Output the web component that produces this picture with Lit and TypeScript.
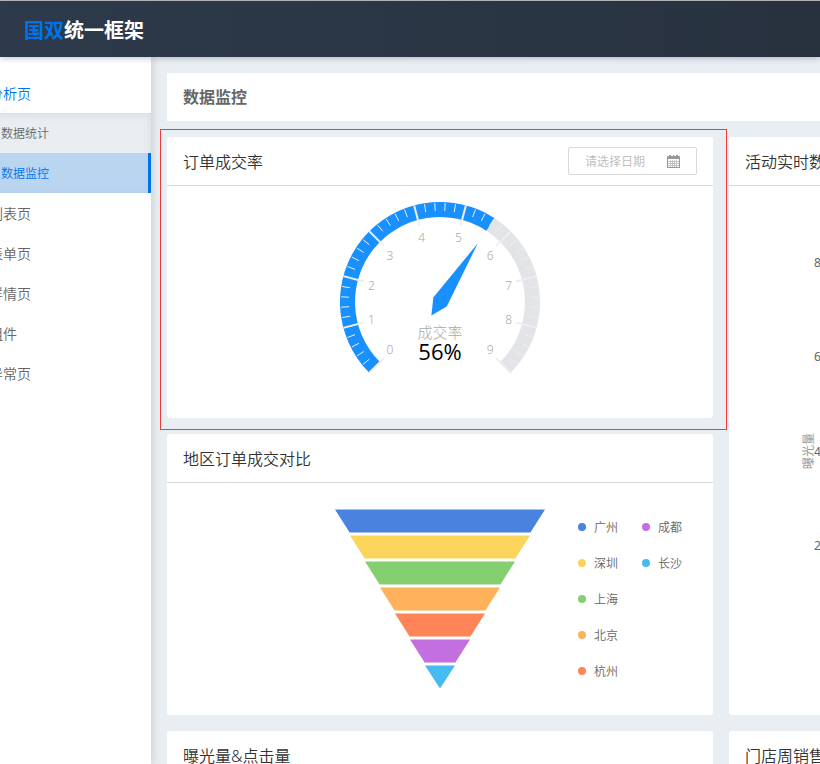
import { LitElement, html, svg, css } from "lit";
import { customElement } from "lit/decorators.js";
import { classMap } from "lit/directives/class-map.js";

const FONT = css`"Noto Sans", "Noto Sans CJK SC", sans-serif`;

const polar = (r: number, deg: number) => {
  const a = (deg * Math.PI) / 180;
  return [Math.sin(a) * r, -Math.cos(a) * r];
};

const ring = (from: number, to: number, inner: number, outer: number) => {
  const large = to - from > 180 ? 1 : 0;
  const [a, b, c, d] = [polar(outer, from), polar(outer, to), polar(inner, to), polar(inner, from)];
  return `M${a} A${outer} ${outer} 0 ${large} 1 ${b} L${c} A${inner} ${inner} 0 ${large} 0 ${d}Z`;
};

@customElement("gauge-chart")
export class GaugeChart extends LitElement {
  static styles = css`
    :host { display: flex; justify-content: center; }
    text { font-family: ${FONT}; text-anchor: middle; }
    .track { fill: #e2e4e8; }
    .value { fill: #1890ff; }
    .major { stroke: #eeeeee; stroke-width: 2; }
    .minor { stroke: #eeeeee; stroke-width: 1; }
    .num { font-size: 12px; font-weight: 300; fill: #aaaaaa; }
    .label { font-size: 15px; font-weight: 300; fill: #aaaaaa; }
    .percent { font-family: "Open Sans", ${FONT}; font-size: 22px; fill: #000000; }
  `;
  render() {
    const start = -135;
    const end = start + 5.6 * 30;
    const line = (cls: string, deg: number, r1: number, r2: number) => {
      const [x1, y1] = polar(r1, deg);
      const [x2, y2] = polar(r2, deg);
      return svg`<line class=${cls} x1=${x1} y1=${y1} x2=${x2} y2=${y2}></line>`;
    };
    const minors = Array.from({ length: 45 }, (_, i) => i).filter((i) => i % 5);
    const majors = Array.from({ length: 10 }, (_, i) => i);
    return html`<svg width="240" height="232" viewBox="-120 -116 240 232" role="img" aria-label="成交率 56%">
      <path class="track" d=${ring(start, 135, 85, 100)}></path>
      <path class="value" d=${ring(start, end, 85, 100)}></path>
      ${minors.map((i) => line("minor", start + i * 6, 91, 99))}
      ${majors.map((i) => line("major", start + i * 30, 79, 100))}
      ${majors.map((i) => {
        const [x] = polar(71, start + i * 30);
        const [, y] = polar(67, start + i * 30);
        return svg`<text class="num" x=${x} y=${y + 5}>${i}</text>`;
      })}
      <path class="value" d="M37.8 -58.7 L6.7 4.6 L-8.6 13.5 L-6.7 -4.5Z"></path>
      <text class="label" x="0" y="36">成交率</text>
      <text class="percent" x="0" y="58">56%</text>
    </svg>`;
  }
}

const REGIONS = [
  ["广州", "#4a82e0"],
  ["深圳", "#fbd55b"],
  ["上海", "#84cf70"],
  ["北京", "#ffb25b"],
  ["杭州", "#ff8458"],
  ["成都", "#c46fe0"],
  ["长沙", "#45bbef"],
];

@customElement("funnel-chart")
export class FunnelChart extends LitElement {
  static styles = css`
    :host { display: grid; grid-template-columns: 1fr 210px 1fr; padding-top: 26px; }
    .funnel { grid-column: 2; }
    .legend {
      display: grid; grid-auto-flow: column; grid-template-rows: repeat(5, 36px);
      justify-content: start; column-gap: 24px; margin: 0 0 0 33px; padding: 0; list-style: none;
      font: 12px/36px ${FONT}; font-weight: 350; color: #666666;
    }
    .item { display: flex; align-items: center; gap: 8px; height: 36px; }
    .region { line-height: 34px; padding-top: 2px; }
    .dot { width: 8px; height: 8px; }
  `;
  render() {
    return html`
      <svg class="funnel" width="210" height="180" viewBox="-105 0 210 180" role="img" aria-label="地区订单成交对比">
        ${REGIONS.map(([, color], i) => {
          const w = 105 - 15 * i;
          const b = i === 6 ? 0 : w - 14.6;
          const y = 0.4 + 26 * i;
          return svg`<polygon fill=${color} points="${-w},${y} ${w},${y} ${b},${y + 23.2} ${-b},${y + 23.2}"></polygon>`;
        })}
      </svg>
      <ul class="legend">
        ${REGIONS.map(([name, color]) => html`<li class="item">
          <svg class="dot" viewBox="0 0 8 8" aria-hidden="true"><circle cx="4" cy="4" r="4" fill=${color}></circle></svg>
          <span class="region">${name}</span>
        </li>`)}
      </ul>`;
  }
}

@customElement("exposure-chart")
export class ExposureChart extends LitElement {
  static styles = css`
    :host { display: block; }
    .plot { display: block; width: 100%; height: 529px; }
    text { font: 12px ${FONT}; }
    .tick { fill: #666666; }
    .title { fill: #999999; text-anchor: middle; }
  `;
  render() {
    return html`<svg class="plot" role="img" aria-label="曝光量">
      ${[8, 6, 4, 2].map((n, i) => svg`<text class="tick" x="85" y=${81 + Math.round(i * 94.3)}>${n}</text>`)}
      <text class="title" transform="translate(84 265) rotate(-90)">曝光量</text>
    </svg>`;
  }
}

@customElement("app-root")
export class AppRoot extends LitElement {
  static styles = css`
    :host {
      display: flex; flex-direction: column; height: 100vh; overflow: hidden;
      background: #e9eef2; color: #333333; font: 14px/40px ${FONT};
    }
    * { box-sizing: border-box; }
    .top {
      flex: none; height: 57px; padding: 0 24px; display: flex; align-items: center;
      position: relative; z-index: 3; border-top: 1px solid #b0b3b5;
      background: linear-gradient(90deg, #2d3a4b, #28323f);
      box-shadow: 0 1px 6px rgba(40, 30, 90, 0.3);
    }
    .brand { margin: 0; padding-top: 4px; font-size: 20px; line-height: 52px; font-weight: 700; color: #ffffff; }
    .accent { color: #0073eb; }
    .body { flex: 1; display: flex; min-height: 0; }
    .side {
      flex: none; width: 200px; margin-left: -49px; padding-top: 16px;
      position: relative; z-index: 2; background: #ffffff;
      box-shadow: 2px 0 8px rgba(0, 21, 41, 0.13);
    }
    .link {
      display: block; height: 40px; padding: 2px 0 0 38px; line-height: 38px; color: #666666;
      font-weight: 350; text-decoration: none; white-space: nowrap;
    }
    .open { color: #0073eb; }
    .sub { background: #e9eef2; box-shadow: inset 0 2px 8px rgba(0, 21, 41, 0.08); }
    .sub .link { padding-left: 50px; font-size: 12px; }
    .sub .current { color: #0073eb; background: rgba(0, 115, 235, 0.2); border-right: 3px solid #0073eb; }
    .main { flex: 1; min-width: 0; padding: 16px; }
    .wide { display: grid; grid-template-columns: repeat(2, minmax(546px, 1fr)); gap: 16px; }
    .heading {
      grid-column: 1 / -1; margin: 0; padding: 0 16px; background: #ffffff;
      font-size: 16px; line-height: 48px; font-weight: 700; color: #666666;
    }
    .card { position: relative; background: #ffffff; border-radius: 3px; min-height: 281px; }
    .tall { grid-row: span 2; }
    .head {
      height: 49px; padding: 0 16px; display: flex; align-items: center; justify-content: space-between;
      border-bottom: 1px solid #d9d9d9;
    }
    .name { margin: 0; padding-top: 2px; font-size: 16px; line-height: 46px; font-weight: 350; }
    .marked::after {
      content: ""; position: absolute; inset: -8px -14px -12px -7px;
      border: 1px solid #f53b3b; pointer-events: none;
    }
    .date {
      display: flex; align-items: center; width: 129px; height: 28px; padding: 0 16px;
      border: 1px solid #d9d9d9; border-radius: 2px;
    }
    .field {
      flex: 1; min-width: 0; padding: 2px 0 0; border: 0; outline: 0; background: none;
      font: 12px/24px ${FONT}; color: #666666;
    }
    .field::placeholder { color: #bfbfbf; opacity: 1; }
    .icon { flex: none; width: 13px; height: 13px; }
  `;

  private items = ["列表页", "表单页", "详情页", "组件", "异常页"];

  private card(title: string, content: unknown = "", mods: Record<string, boolean> = {}, extra: unknown = "") {
    return html`<section class=${classMap({ card: true, ...mods })}>
      <header class="head"><h2 class="name">${title}</h2>${extra}</header>
      ${content}
    </section>`;
  }

  render() {
    const date = html`<label class="date">
      <input class="field" type="text" placeholder="请选择日期" aria-label="请选择日期" />
      <svg class="icon" viewBox="0 0 13 13" aria-hidden="true">
        <path fill="#999999" d="M0 2Q0 1 1 1H2V0H4V1H6V0H7V1H9V0H11V1H12Q13 1 13 2V13H0Z"></path>
        <path fill="#ffffff" d="M1 4H12V12H1Z"></path>
        <path stroke="#c4c4c4" fill="none" d="M3.5 5V12M5.5 5V12M7.5 5V12M9.5 5V12M1 6.5H12M1 8.5H12M1 10.5H12"></path>
      </svg>
    </label>`;
    return html`
      <header class="top"><h1 class="brand"><span class="accent">国双</span>统一框架</h1></header>
      <div class="body">
        <nav class="side">
          <a class="link open" href="#analysis">分析页</a>
          <div class="sub">
            <a class="link" href="#stats">数据统计</a>
            <a class="link current" href="#monitor" aria-current="page">数据监控</a>
          </div>
          ${this.items.map((t) => html`<a class="link" href="#">${t}</a>`)}
        </nav>
        <main class="main">
          <div class="wide">
            <h2 class="heading">数据监控</h2>
            ${this.card("订单成交率", html`<gauge-chart></gauge-chart>`, { marked: true }, date)}
            ${this.card("活动实时数据", html`<exposure-chart></exposure-chart>`, { tall: true })}
            ${this.card("地区订单成交对比", html`<funnel-chart></funnel-chart>`)}
            ${this.card("曝光量&点击量")}
            ${this.card("门店周销售额")}
          </div>
        </main>
      </div>`;
  }
}
